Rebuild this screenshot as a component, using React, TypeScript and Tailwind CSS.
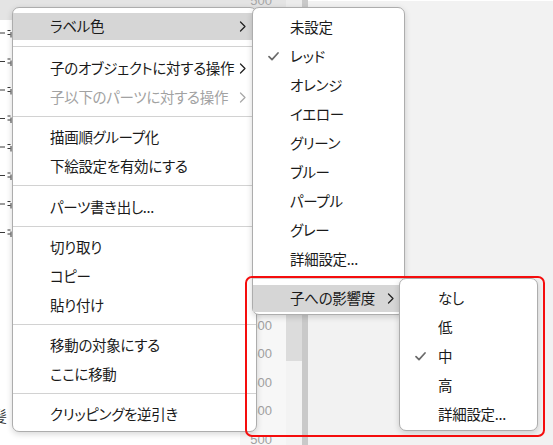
import React from "react";

type ItemProps = {
  label: string;
  disabled?: boolean;
  arrow?: boolean;
  checked?: boolean;
  highlighted?: boolean;
  pl: string;
};

function Chevron({ color }: { color: string }) {
  return (
    <svg width="7" height="11" viewBox="0 0 7 11" fill="none" className="shrink-0">
      <path d="M1.5 1 L6 5.5 L1.5 10" stroke={color} strokeWidth="1.25" strokeLinecap="round" strokeLinejoin="round" />
    </svg>
  );
}

function Check() {
  return (
    <svg width="11" height="9" viewBox="0 0 11 9" fill="none">
      <path d="M1 4.6 L4 7.6 L10 1" stroke="#6b6b6b" strokeWidth="1.7" strokeLinecap="round" strokeLinejoin="round" />
    </svg>
  );
}

function Item({ label, disabled, arrow, checked, highlighted, pl }: ItemProps) {
  return (
    <div className="h-[29px] py-px">
      <div
        className={`relative flex h-full items-center pr-[10px] ${pl} ${
          highlighted ? "bg-[#d6d6d6]" : ""
        }`}
      >
        {checked && (
          <div className="absolute left-[15px] top-[9px]">
            <Check />
          </div>
        )}
        <span
          className={`flex-1 whitespace-nowrap leading-none ${
            disabled ? "text-[#a2a2a2]" : "text-[#1a1a1a]"
          }`}
        >
          {label}
        </span>
        {arrow && <Chevron color={disabled ? "#a8a8a8" : "#222222"} />}
      </div>
    </div>
  );
}

function Sep({ cls }: { cls: string }) {
  return <div className={`h-px bg-[#d2d2d2] ${cls}`} />;
}

export default function App() {
  const ticks = [33, 61.5, 90, 118.5, 147, 175.5, 204, 232.5];
  const labels = Array.from({ length: 15 });
  return (
    <div className="relative h-[445px] w-[553px] overflow-hidden bg-[#f2f2f2] font-['Noto_Sans_CJK_JP',sans-serif] text-[14.5px] tracking-[-0.3px] [font-feature-settings:'palt']">
      {/* background */}
      <div className="flex h-full">
        <div className="flex w-[302px] flex-col">
          <div className="flex h-[20px] shrink-0 bg-[#e4e4e4]">
            <div className="w-[240px]" />
            <div className="flex w-[46px] justify-end overflow-hidden pr-[14px]">
              <span className="-mt-[9px] font-['Liberation_Sans',sans-serif] text-[13px] leading-[20px] tracking-normal text-[#a6a6a6]">500</span>
            </div>
            <div className="w-[16px] bg-[#ececec]" />
          </div>
          <div className="flex flex-1 bg-white">
            <div className="relative w-[12px]">
              <svg width="12" height="240" viewBox="0 0 12 240" className="block">
                {ticks.map((t, i) => {
                  const y = t - 20;
                  return (
                    <g key={i} stroke="#3a3a3a" strokeWidth="1">
                      <line x1="0" y1={y} x2="5" y2={y} />
                      <line x1="7.5" y1={y - 2.5} x2="10.5" y2={y - 2.5} />
                      <line x1="7.5" y1={y + 1.5} x2="10.5" y2={y + 1.5} />
                      <line x1="11" y1={y - 1} x2="11" y2={y + 4.5} />
                    </g>
                  );
                })}
              </svg>
              <span className="absolute left-[-8px] top-[388px] text-[15px] leading-none text-[#333]">髪</span>
            </div>
            <div className="w-[228px]" />
            <div className="flex w-[46px] flex-col items-end bg-[#f7f7f7] pr-[14px] pt-[6px]">
              {labels.map((_, i) => (
                <div
                  key={i}
                  className="flex h-[28.5px] shrink-0 items-center font-['Liberation_Sans',sans-serif] text-[13px] leading-none tracking-normal text-[#a0a0a0]"
                >
                  500
                </div>
              ))}
            </div>
            <div className="flex w-[16px] flex-col">
              <div className="h-[341px] bg-[#dcdcdc]" />
              <div className="flex-1 bg-[#f3f3f3]" />
            </div>
          </div>
        </div>
        <div className="w-[6px] bg-[#c9c9c9]" />
        <div className="flex-1 border-t border-white bg-[#f2f2f2]" />
      </div>

      {/* main context menu */}
      <div className="absolute left-[12px] top-[7px] w-[245px] rounded-[7px] border border-[#adadad] bg-white pb-[2px] pt-[4px] shadow-[0_2px_6px_rgba(0,0,0,0.16)]">
        <Item pl="pl-[37px]" label="ラベル色" arrow highlighted />
        <Sep cls="mt-[5px] mb-[7px]" />
        <Item pl="pl-[37px]" label="子のオブジェクトに対する操作" arrow />
        <Item pl="pl-[37px]" label="子以下のパーツに対する操作" arrow disabled />
        <Sep cls="mt-[4px] mb-[6px]" />
        <Item pl="pl-[37px]" label="描画順グループ化" />
        <Item pl="pl-[37px]" label="下絵設定を有効にする" />
        <Sep cls="mt-[4px] mb-[7px]" />
        <Item pl="pl-[37px]" label="パーツ書き出し..." />
        <Sep cls="mt-[4px] mb-[6px]" />
        <Item pl="pl-[37px]" label="切り取り" />
        <Item pl="pl-[37px]" label="コピー" />
        <Item pl="pl-[37px]" label="貼り付け" />
        <Sep cls="mt-[4px] mb-[6px]" />
        <Item pl="pl-[37px]" label="移動の対象にする" />
        <Item pl="pl-[37px]" label="ここに移動" />
        <Sep cls="mt-[4px] mb-[6px]" />
        <Item pl="pl-[37px]" label="クリッピングを逆引き" />
      </div>

      {/* label colour submenu */}
      <div className="absolute left-[252px] top-[7px] w-[153px] rounded-[7px] border border-[#adadad] bg-white pb-[1px] pt-[5px] shadow-[0_2px_6px_rgba(0,0,0,0.16)]">
        <Item pl="pl-[37px]" label="未設定" />
        <Item pl="pl-[37px]" label="レッド" checked />
        <Item pl="pl-[37px]" label="オレンジ" />
        <Item pl="pl-[37px]" label="イエロー" />
        <Item pl="pl-[37px]" label="グリーン" />
        <Item pl="pl-[37px]" label="ブルー" />
        <Item pl="pl-[37px]" label="パープル" />
        <Item pl="pl-[37px]" label="グレー" />
        <Item pl="pl-[37px]" label="詳細設定..." />
        <Sep cls="mt-[4px] mb-[5px]" />
        <Item pl="pl-[37px]" label="子への影響度" arrow highlighted />
      </div>

      {/* influence submenu */}
      <div className="absolute left-[399px] top-[278px] w-[139px] rounded-[7px] border border-[#adadad] bg-white pb-[1px] pt-[5px] shadow-[0_2px_6px_rgba(0,0,0,0.16)]">
        <Item pl="pl-[38px]" label="なし" />
        <Item pl="pl-[38px]" label="低" />
        <Item pl="pl-[38px]" label="中" checked />
        <Item pl="pl-[38px]" label="高" />
        <Item pl="pl-[38px]" label="詳細設定..." />
      </div>

      {/* red annotation */}
      <div className="pointer-events-none absolute left-[245px] top-[276px] h-[161px] w-[300px] rounded-[7px] border-2 border-[#f50d0d]" />
    </div>
  );
}
